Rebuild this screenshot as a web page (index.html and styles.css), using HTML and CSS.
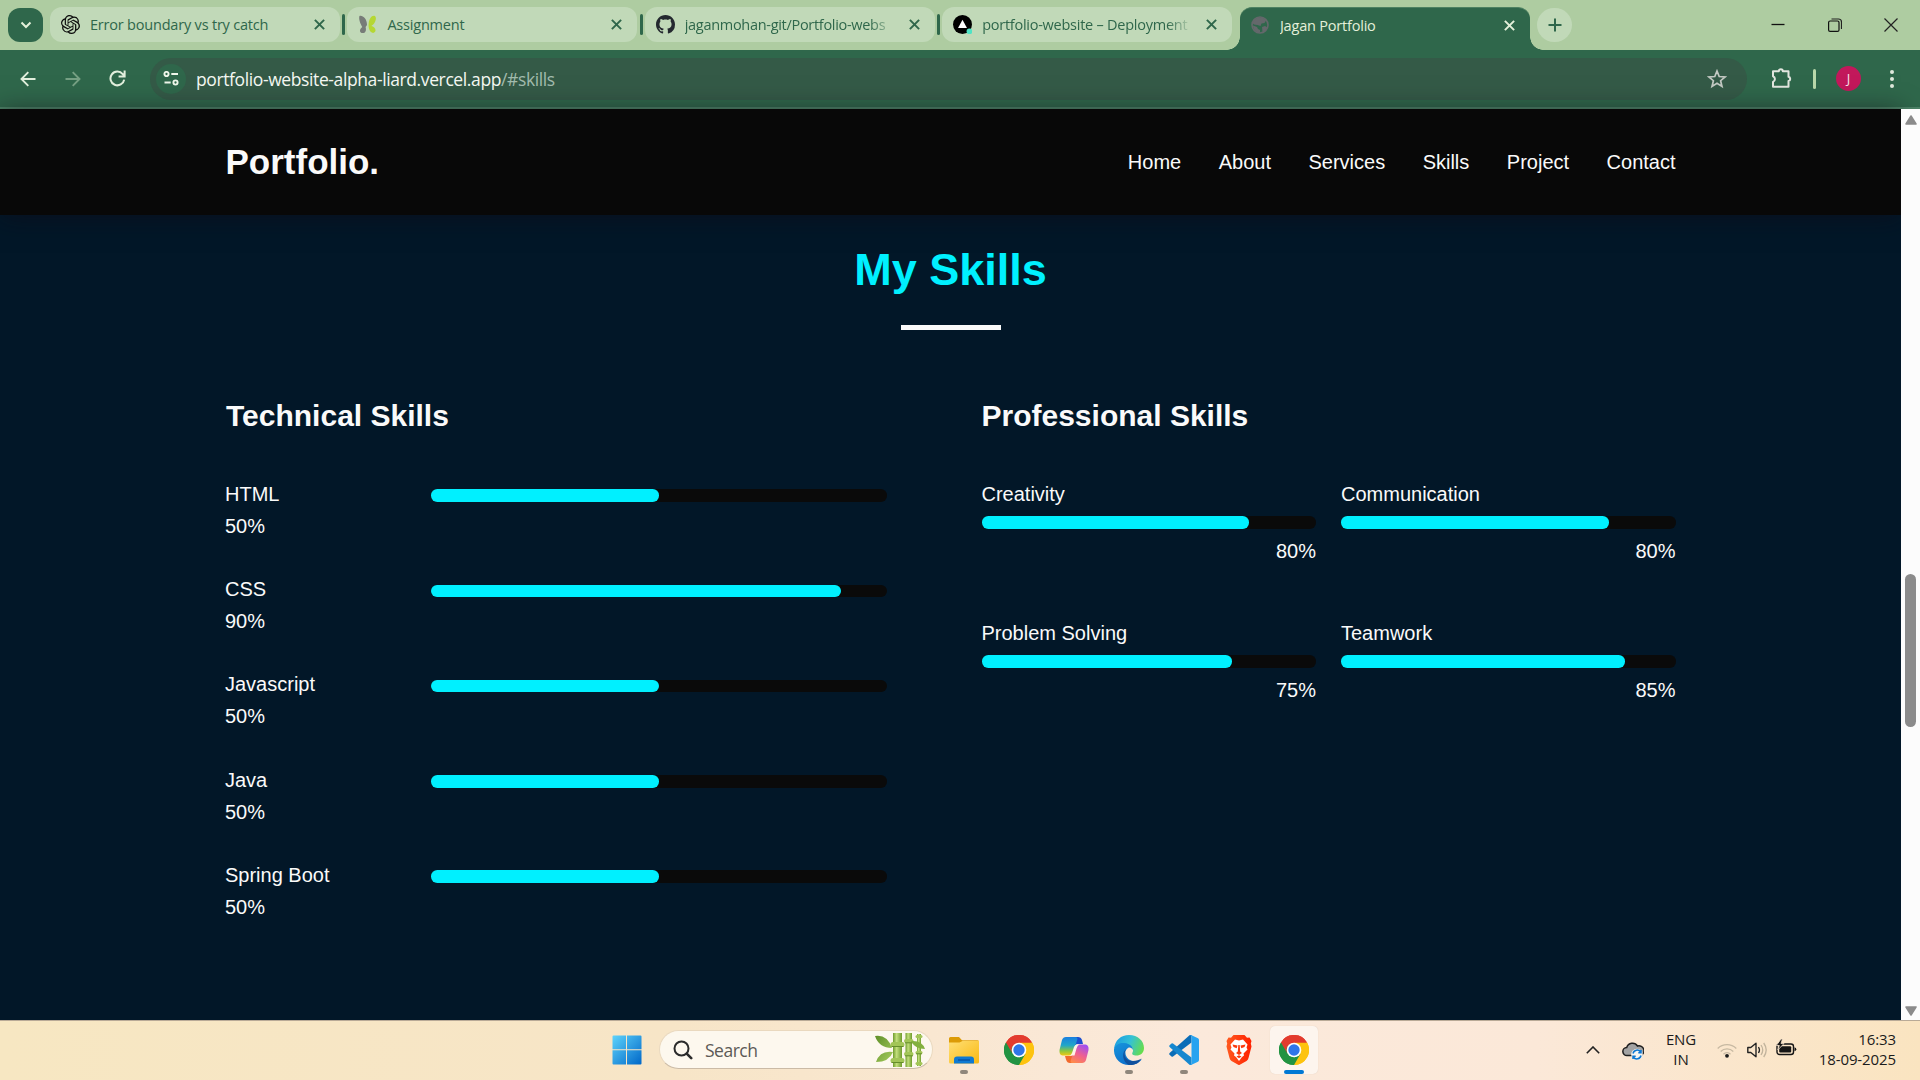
FILE: index.html
```html
<!DOCTYPE html>
<html lang="en">
<head>
<meta charset="utf-8">
<title>Jagan Portfolio</title>
<link rel="stylesheet" href="styles.css">
</head>
<body>
<svg width="0" height="0" class="defs" aria-hidden="true">
  <defs>
    <linearGradient id="win" x1="0" y1="0" x2="1" y2="1"><stop offset="0" stop-color="#5ed3fb"/><stop offset="1" stop-color="#0067c8"/></linearGradient>
    <linearGradient id="folder" x1="0" y1="0" x2="1" y2="1"><stop offset="0" stop-color="#ffdf75"/><stop offset="1" stop-color="#f9b912"/></linearGradient>
    <linearGradient id="edgeTop" x1="0" y1="0.3" x2="1" y2="0.6"><stop offset="0" stop-color="#1b9de2"/><stop offset=".5" stop-color="#35c1d5"/><stop offset="1" stop-color="#66dd4c"/></linearGradient>
    <linearGradient id="edgeLeft" x1="0" y1="0" x2="0.6" y2="1"><stop offset="0" stop-color="#1795dc"/><stop offset="1" stop-color="#0d6cc9"/></linearGradient>
    <linearGradient id="copA" x1="0" y1="0" x2="0" y2="1"><stop offset="0" stop-color="#1a7fe0"/><stop offset=".45" stop-color="#21a6c9"/><stop offset=".75" stop-color="#8cc63f"/><stop offset="1" stop-color="#f3c811"/></linearGradient>
    <linearGradient id="copB" x1="0.7" y1="0" x2="0.2" y2="1"><stop offset="0" stop-color="#a04ff0"/><stop offset=".5" stop-color="#ee5f92"/><stop offset="1" stop-color="#ff8b4a"/></linearGradient>
    <linearGradient id="brave" x1="0" y1="0" x2="1" y2="0"><stop offset="0" stop-color="#ff5a1f"/><stop offset="1" stop-color="#ff2000"/></linearGradient>
    <linearGradient id="stalk" x1="0" y1="0" x2="1" y2="0"><stop offset="0" stop-color="#6f9c2d"/><stop offset=".4" stop-color="#c3df7c"/><stop offset="1" stop-color="#6f9c2d"/></linearGradient>
    <linearGradient id="leaf" x1="0" y1="0" x2="1" y2="1"><stop offset="0" stop-color="#5f8f28"/><stop offset="1" stop-color="#a7cd5e"/></linearGradient>
    <symbol id="x" viewBox="0 0 10 10"><path d="M.8.8l8.4 8.4M9.2.8L.8 9.2" fill="none" stroke="currentColor" stroke-width="1.8"/></symbol>
    <symbol id="chrome" viewBox="0 0 30 30">
      <path d="M15 15L2 7.5A15 15 0 0 1 28 7.5z" fill="#e33b2e"/>
      <path d="M15 15L28 7.5A15 15 0 0 1 15 30z" fill="#fdc30f"/>
      <path d="M15 15L15 30A15 15 0 0 1 2 7.5z" fill="#229342"/>
      <path d="M15 7.5H28A15 15 0 0 1 15 30L21.5 18.7z" fill="#fdc30f"/>
      <path d="M2 7.5L8.5 18.7 15 22.5 21.5 18.7 15 30A15 15 0 0 1 2 7.5z" fill="#229342"/>
      <path d="M2 7.5A15 15 0 0 1 28 7.5H15A7.5 7.5 0 0 0 8.5 18.7z" fill="#e33b2e"/>
      <circle cx="15" cy="15" r="7.3" fill="#fff"/><circle cx="15" cy="15" r="5.7" fill="#2f76e9"/>
    </symbol>
  </defs>
</svg>

<header class="tabstrip">
  <button class="tab-search"><svg width="12" height="8" viewBox="0 0 12 8"><path d="M1.5 1.5L6 6l4.5-4.5" fill="none" stroke="#e4f0da" stroke-width="2"/></svg></button>
  <div class="tab">
    <svg class="fav" viewBox="0 0 24 24"><path fill="#0d0d0d" d="M22.282 9.821a5.985 5.985 0 0 0-.516-4.910 6.046 6.046 0 0 0-6.510-2.900A6.065 6.065 0 0 0 4.981 4.182a5.985 5.985 0 0 0-3.998 2.900 6.046 6.046 0 0 0 .743 7.097 5.980 5.980 0 0 0 .511 4.911 6.051 6.051 0 0 0 6.515 2.900A5.985 5.985 0 0 0 13.260 24a6.056 6.056 0 0 0 5.772-4.206 5.990 5.990 0 0 0 3.998-2.900 6.056 6.056 0 0 0-.748-7.073zm-9.022 12.608a4.476 4.476 0 0 1-2.876-1.041l.141-.080 4.779-2.758a.795.795 0 0 0 .393-.682v-6.737l2.020 1.169a.071.071 0 0 1 .038.052v5.583a4.504 4.504 0 0 1-4.495 4.494zm-9.660-4.126a4.471 4.471 0 0 1-.535-3.014l.142.085 4.783 2.759a.771.771 0 0 0 .780 0l5.843-3.369v2.333a.080.080 0 0 1-.033.061L9.740 19.950a4.499 4.499 0 0 1-6.140-1.647zM2.340 7.896a4.485 4.485 0 0 1 2.366-1.973V11.600a.766.766 0 0 0 .388.677l5.815 3.354-2.020 1.169a.076.076 0 0 1-.071 0l-4.830-2.787A4.504 4.504 0 0 1 2.340 7.872zm16.597 3.855l-5.833-3.387L15.119 7.200a.076.076 0 0 1 .071 0l4.830 2.791a4.494 4.494 0 0 1-.676 8.105v-5.678a.790.790 0 0 0-.407-.667zm2.010-3.023l-.141-.085-4.774-2.782a.776.776 0 0 0-.785 0L9.409 9.230V6.897a.066.066 0 0 1 .028-.061l4.830-2.787a4.499 4.499 0 0 1 6.680 4.660zM8.307 12.863l-2.020-1.164a.080.080 0 0 1-.038-.057V6.075a4.499 4.499 0 0 1 7.375-3.453l-.142.080L8.704 5.460a.795.795 0 0 0-.393.681zm1.097-2.365l2.602-1.500 2.607 1.500v2.999l-2.597 1.500-2.607-1.500z"/></svg>
    <span class="title t1">Error boundary vs try catch</span><svg class="close"><use href="#x"/></svg>
  </div>
  <i class="sep"></i>
  <div class="tab">
    <svg class="fav" viewBox="0 0 20 20"><path d="M1.500 1C5 0 9.500 4 9.500 10.500L8 12.500C9 16 8 19 5 19 1.500 19 1 15 4.500 12.500 2.500 9 .5 4.500 1.500 1z" fill="#777c78"/><path d="M17 .8c3 .8 2 5.500-.5 8.700-1 1.300-2 1.500-2.500 2.200 3 .8 5.500 3 4 6-2 2.800-5.500.3-6.500-3.500-.7-3-.2-4.500-.2-6C11.800 4.500 14 .5 17 .8z" fill="#b5d733"/></svg>
    <span class="title t2">Assignment</span><svg class="close"><use href="#x"/></svg>
  </div>
  <i class="sep"></i>
  <div class="tab">
    <svg class="fav" viewBox="0 0 16 16"><path fill="#24292f" d="M8 0C3.580 0 0 3.580 0 8c0 3.540 2.290 6.530 5.470 7.590.4.070.55-.17.55-.38 0-.19-.01-.82-.01-1.490-2.010.37-2.530-.49-2.690-.94-.09-.23-.48-.94-.82-1.130-.28-.15-.68-.52-.01-.53.63-.01 1.080.58 1.230.82.72 1.210 1.870.87 2.330.66.070-.52.28-.87.51-1.070-1.780-.2-3.640-.89-3.640-3.950 0-.87.31-1.590.82-2.150-.08-.2-.36-1.020.08-2.120 0 0 .67-.21 2.200.82.64-.18 1.320-.27 2-.27s1.360.09 2 .27c1.530-1.040 2.200-.82 2.200-.82.44 1.100.16 1.920.08 2.120.51.56.82 1.270.82 2.150 0 3.070-1.870 3.750-3.650 3.950.29.25.54.73.54 1.480 0 1.070-.01 1.930-.01 2.200 0 .21.15.46.55.38A8.010 8.010 0 0 0 16 8c0-4.420-3.580-8-8-8z"/></svg>
    <span class="title t3">jaganmohan-git/Portfolio-webs</span><svg class="close"><use href="#x"/></svg>
  </div>
  <i class="sep"></i>
  <div class="tab">
    <svg class="fav" viewBox="0 0 20 20"><circle cx="10" cy="10" r="10" fill="#000"/><path d="M10 5l4.700 8.700H5.300z" fill="#fff"/><circle cx="17.300" cy="17.300" r="3" fill="#4fe3c5"/></svg>
    <span class="title t4">portfolio-website – Deployment</span><svg class="close"><use href="#x"/></svg>
  </div>
  <div class="tab active">
    <svg class="fav globe" viewBox="0 0 18 18"><circle cx="9" cy="9" r="8" fill="none" stroke="#64686b" stroke-width="1.600"/><path d="M9 1.500c3 0 4.500 1 6 3L13.500 7l-3 .5-1 2.500-3-1L3 8.500 1.500 7C2.500 3.500 5.500 1.500 9 1.500zM2 9.500l4 1.500 1 2 2 1v2.500C5 16.500 2 13.500 2 9.500zM11 11l3-1 2.500 1.500c-1 2.500-2.500 4-5 4.800z" fill="#64686b"/></svg>
    <span class="title t5">Jagan Portfolio</span><svg class="close"><use href="#x"/></svg>
  </div>
  <button class="new-tab"><svg width="14" height="14" viewBox="0 0 14 14"><path d="M7 .5v13M.5 7h13" stroke="#2f674b" stroke-width="2"/></svg></button>
  <div class="win-controls">
    <svg width="14" height="14" viewBox="0 0 14 14"><path d="M.5 6.500h13" stroke="#111" stroke-width="1.300"/></svg>
    <svg width="14" height="14" viewBox="0 0 14 14"><path d="M3.500 1h7a3 3 0 0 1 3 3v7" fill="none" stroke="#222" stroke-width="1.200"/><rect x=".6" y="3" width="10.400" height="10.400" rx="1.500" fill="none" stroke="#111" stroke-width="1.200"/></svg>
    <svg width="14" height="14" viewBox="0 0 14 14"><path d="M.5.5l13 13M13.500.5l-13 13" stroke="#222" stroke-width="1.200"/></svg>
  </div>
</header>

<div class="toolbar">
  <svg class="nav-ic" viewBox="0 0 16 16"><path d="M15.500 8H1.500M8.300 1.200L1.500 8l6.800 6.800" fill="none" stroke="#e2efdd" stroke-width="1.900"/></svg>
  <svg class="nav-ic" viewBox="0 0 16 16"><path d="M.5 8h14M7.700 1.200L14.500 8l-6.800 6.800" fill="none" stroke="#76a084" stroke-width="1.900"/></svg>
  <svg class="nav-ic" viewBox="0 0 16 16"><path d="M14.300 9A6.500 6.500 0 1 1 12.900 3.800L14.500 5.500M14.700.5v5.700H9" fill="none" stroke="#e2efdd" stroke-width="1.900"/></svg>
  <div class="omnibox">
    <span class="site"><svg width="16" height="15" viewBox="0 0 16 15"><g fill="none" stroke="#eef6ea" stroke-width="1.900"><circle cx="3.500" cy="3" r="2.100"/><path d="M8.300 3H15M1.500 11.500h6.200"/><circle cx="12.500" cy="11.500" r="2.100"/></g></svg></span>
    <span class="url">portfolio-website-alpha-liard.vercel.app<em>/#skills</em></span>
    <svg class="star" viewBox="0 0 20 20"><path d="M10 2l2.200 5.500 5.900.4-4.500 3.800 1.400 5.800-5-3.200-5 3.200 1.400-5.800L1.900 7.900l5.900-.4z" fill="none" stroke="#c3c9c3" stroke-width="1.700"/></svg>
  </div>
  <svg class="ext" viewBox="0 0 22 22"><path d="M2 4.200h5.800a2 2 0 0 1 4 0H17.500V9.800a2.200 2.200 0 0 1 0 4.300v5.700H2v-4.900a3 3 0 0 0 0-5.600z" fill="none" stroke="#e2e6df" stroke-width="2" stroke-linejoin="round"/></svg>
  <i class="bar"></i>
  <span class="avatar">J</span>
  <svg class="dots" viewBox="0 0 4 18"><g fill="#dfe8dc"><circle cx="2" cy="2" r="2"/><circle cx="2" cy="9" r="2"/><circle cx="2" cy="16" r="2"/></g></svg>
</div>

<div class="viewport">
  <div class="page">
    <nav class="site-header">
      <span class="logo">Portfolio.</span>
      <div class="links"><a>Home</a><a>About</a><a>Services</a><a>Skills</a><a>Project</a><a>Contact</a></div>
    </nav>
    <main class="skills">
      <h2>My Skills</h2>
      <div class="rule"></div>
      <div class="columns">
        <section>
          <h3>Technical Skills</h3>
          <div class="tech"><p>HTML<br>50%</p><div class="track"><div class="fill" style="width:50%"></div></div></div>
          <div class="tech"><p>CSS<br>90%</p><div class="track"><div class="fill" style="width:90%"></div></div></div>
          <div class="tech"><p>Javascript<br>50%</p><div class="track"><div class="fill" style="width:50%"></div></div></div>
          <div class="tech"><p>Java<br>50%</p><div class="track"><div class="fill" style="width:50%"></div></div></div>
          <div class="tech"><p>Spring Boot<br>50%</p><div class="track"><div class="fill" style="width:50%"></div></div></div>
        </section>
        <section>
          <h3>Professional Skills</h3>
          <div class="prof">
            <div><p>Creativity</p><div class="track"><div class="fill" style="width:80%"></div></div><p class="pct">80%</p></div>
            <div><p>Communication</p><div class="track"><div class="fill" style="width:80%"></div></div><p class="pct">80%</p></div>
            <div><p>Problem Solving</p><div class="track"><div class="fill" style="width:75%"></div></div><p class="pct">75%</p></div>
            <div><p>Teamwork</p><div class="track"><div class="fill" style="width:85%"></div></div><p class="pct">85%</p></div>
          </div>
        </section>
      </div>
    </main>
  </div>
  <div class="scrollbar">
    <svg width="12" height="10" viewBox="0 0 12 10"><path d="M6 1L11 9H1z" fill="#8b8b8b" stroke="#8b8b8b" stroke-width="1.500" stroke-linejoin="round"/></svg>
    <div class="thumb"></div>
    <svg width="12" height="10" viewBox="0 0 12 10"><path d="M6 9L11 1H1z" fill="#8b8b8b" stroke="#8b8b8b" stroke-width="1.500" stroke-linejoin="round"/></svg>
  </div>
</div>

<footer class="taskbar">
  <div class="apps">
    <span class="app"><svg width="30" height="30" viewBox="0 0 30 30"><path d="M1.500.5H14v13.700H.5V1.500q0-1 1-1zM15 .5h13.500q1 0 1 1v12.700H15zM.5 15.200H14v14.300H1.500q-1 0-1-1zM15 15.200h14.500v13.300q0 1-1 1H15z" fill="url(#win)"/></svg></span>
    <div class="search">
      <svg width="20" height="20" viewBox="0 0 20 20"><circle cx="8.500" cy="8.500" r="7" fill="none" stroke="#2b2b2b" stroke-width="2"/><path d="M13.700 13.700l4.500 4.500" stroke="#2b2b2b" stroke-width="2.600" stroke-linecap="round"/></svg>
      <span>Search</span>
      <svg class="bamboo" width="50" height="34" viewBox="0 0 50 34">
        <path d="M0 3q12-2 17 12Q4 15 0 3zM1 29q4-12 17-10Q14 29 1 29z" fill="url(#leaf)"/>
        <rect x="18" y="0" width="9" height="34" fill="url(#stalk)"/><rect x="30.500" y="0" width="6.500" height="34" fill="url(#stalk)"/><rect x="42" y="1" width="4" height="32" fill="url(#stalk)"/>
        <g fill="#a2c557"><rect x="15.500" y="9" width="14" height="5" rx="2.500"/><rect x="15.500" y="25" width="14" height="5" rx="2.500"/><rect x="29" y="6" width="9.500" height="4" rx="2"/><rect x="29" y="19" width="9.500" height="4" rx="2"/><rect x="40.500" y="2" width="7" height="3" rx="1.500"/><rect x="40.500" y="18" width="7" height="3" rx="1.500"/><rect x="40.500" y="29" width="7" height="3" rx="1.500"/></g>
        <path d="M16.500 13.500h12M16.500 29.500h12M30 9.800h8M30 22.800h8M41 20.800h6" stroke="#648d2a" stroke-width="1"/>
        <path d="M36 8q11-1 14 8-10 0-14-8z" fill="#83b03e"/>
      </svg>
    </div>
    <span class="app run"><svg width="30" height="27" viewBox="0 0 30 27"><path d="M0 1.500Q0 0 1.500 0H10l3 3.200h15.500q1.500 0 1.500 1.500V10H0z" fill="#dc9b06"/><path d="M0 5.500h10.500L14 3.800h16V25q0 1.500-1.500 1.500h-27Q0 26.500 0 25z" fill="url(#folder)"/><path d="M5 26.500v-4q0-3 3-3h14q3 0 3 3v4z" fill="#107ad2"/><path d="M9 23h12" stroke="#064c9c" stroke-width="1.200"/></svg></span>
    <span class="app"><svg width="30" height="30"><use href="#chrome"/></svg></span>
    <span class="app"><svg width="30" height="28" viewBox="0 0 30 28"><path d="M15 1h4q3 0 4 3l1 4h-5q-3 0-4 4z" fill="#1b4fd0"/><path d="M7 1h9.500q2.500 0 1.800 2.500L14 17q-1 2.500-3.500 2.500H3.500Q0 19 .5 14L3 4Q4 1 7 1z" fill="url(#copA)"/><path d="M15 27h-4q-3 0-4-3.500L6 20h5q3 0 4-4z" fill="#f2692c"/><path d="M23 27h-9.500q-2.500 0-1.800-2.500L16 11q1-2.500 3.500-2.500h7Q30 9 29.500 14L27 24q-1 3-4 3z" fill="url(#copB)"/><path d="M18 8.500h2.500q-2 .5-3 4l-2 7H10q2.300-.3 3-2.500l2-6q.8-2.500 3-2.500z" fill="#fff3e8"/></svg></span>
    <span class="app run"><svg width="30" height="30" viewBox="0 0 30 30"><path d="M0 14C1 5 7 0 15 0c9 0 15 6 15 13 0 5-3.500 7.500-7.500 7.500-3.500 0-5-1.200-4-3 2-3.500-1-7.500-6-7.500C6 10 1 12 0 14z" fill="url(#edgeTop)"/><path d="M0 14c2-5 6-6.500 10.500-6 5.500.5 8.500 4 8.500 7-1-2-3-3-5-2-4.500 2.500-3 10 3 12.500 4 1.700 8 .5 11-1.500C25 28.500 20 30 15 30 6 30-.5 23 0 14z" fill="url(#edgeLeft)"/><path d="M12.500 14c-4 4-1.500 11.500 5 12 4 .3 7.500-.8 10-2.500C24 29.500 19 30.300 15 30 8 27 7.500 16.500 12.500 14z" fill="#10509d"/></svg></span>
    <span class="app run"><svg width="30" height="30" viewBox="0 0 30 30"><path d="M22.500 7.500L4 21.500q-.8.500-1.500 0L.6 19.800q-.8-.9 0-1.800L20.500.3q.8-.6 2-.2z" fill="#0b6db7"/><path d="M22.500 22.500L4 8.500q-.8-.5-1.500 0L.6 10.200q-.8.900 0 1.800l19.900 17.700q.8.600 2 .2z" fill="#1687cf"/><path d="M22 0l7 3.300q1 .5 1 1.600v20.200q0 1.100-1 1.600L22 30q-1 .2-1.700-.5 2.200.6 2.200-1.500V2q0-2.100-2.200-1.500Q21-.2 22 0z" fill="#27a3f0"/></svg></span>
    <span class="app"><svg width="26" height="30" viewBox="0 0 26 30"><path d="M7.500 0h11L21 2.800l2.500-.3L25.500 6l-.7 2.500.7 3-3 11.500q-.5 2-2 3L13 30.200 5.500 26q-1.500-1-2-3L.5 11.500l.7-3L.5 6l2-3.500 2.500.3z" fill="url(#brave)"/><path d="M9 4.500l4 1 4-1 4.500 5-1 3 1 2-4 4 .5 2-2 1.500-3 4-3-4-2-1.500.5-2-4-4 1-2-1-3z" fill="#fff"/><path d="M6.500 9.500l5 1-.8 2.700-3.200-1.200zM19.500 9.500l-5 1 .8 2.700 3.200-1.200zM12.300 10h1.400l.5 6.500L16 18l-3 2-3-2 1.800-1.500zM10.500 21.500l2.500-1.300 2.500 1.300-2.500 1.700z" fill="#fb3a0e"/></svg></span>
    <span class="app current"><svg width="30" height="30"><use href="#chrome"/></svg></span>
  </div>
  <div class="tray">
    <svg class="chev" width="14" height="8" viewBox="0 0 14 8"><path d="M.8 7.200L7 1l6.200 6.200" fill="none" stroke="#222" stroke-width="1.600"/></svg>
    <svg class="cloud" width="22" height="20" viewBox="0 0 22 20"><path d="M5 14.500a4 4 0 0 1-.3-8A6 6 0 0 1 15.500 5a4.700 4.700 0 0 1 3 9.500z" fill="#a3a3a3" stroke="#1f1f1f" stroke-width="1.500"/><circle cx="15" cy="13.500" r="5.800" fill="#f7f5f1"/><path d="M11 12.500a4.200 4.200 0 0 1 7.600-1.500M19 9v2.700h-2.700M19 14.500a4.200 4.200 0 0 1-7.600 1.500M11 18v-2.700h2.700" fill="none" stroke="#0b76d1" stroke-width="1.500"/></svg>
    <span class="lang">ENG<br>IN</span>
    <svg class="wifi" width="20" height="15" viewBox="0 0 20 15"><g fill="none" stroke="#c7b9a2" stroke-width="1.300"><path d="M.7 5.500a13 13 0 0 1 18.600 0M3.700 8.500a9 9 0 0 1 12.600 0M6.500 11.200a5 5 0 0 1 7 0"/></g><circle cx="10" cy="12.800" r="1.900" fill="#1b1b1b"/></svg>
    <svg class="vol" width="20" height="16" viewBox="0 0 20 16"><path d="M.8 5.500h3L9 1.200v13.600L3.800 10.500h-3z" fill="none" stroke="#222" stroke-width="1.400" stroke-linejoin="round"/><path d="M11.500 5q2 3 0 6" fill="none" stroke="#222" stroke-width="1.300"/><path d="M14 3q3.500 5 0 10M16.700 1q5 7 0 14" fill="none" stroke="#c1b39c" stroke-width="1.300"/></svg>
    <svg class="bat" width="21" height="17" viewBox="0 0 21 17"><rect x="1" y="5" width="16.500" height="10.500" rx="2.500" fill="none" stroke="#151515" stroke-width="1.400"/><rect x="3.200" y="7.200" width="12" height="6.200" rx="1" fill="#151515"/><path d="M18.500 8.200q1.800.5 1.800 2t-1.800 2z" fill="#151515"/><path d="M5 0L.3 6.500h3L1.800 11 8 4.500H5L6.500 0z" fill="#151515" stroke="#f9e6cf" stroke-width=".8"/></svg>
    <span class="clock">16:33<br>18-09-2025</span>
  </div>
</footer>
</body>
</html>
```
FILE: styles.css
```css
* { box-sizing: border-box; }
body {
  margin: 0; width: 1920px; height: 1080px; overflow: hidden;
  display: flex; flex-direction: column;
  font-family: "Open Sans", "Noto Sans", sans-serif;
}
.defs { position: absolute; }
button { border: 0; padding: 0; display: flex; align-items: center; justify-content: center; }
svg { display: block; flex: none; }

/* tab strip */
.tabstrip { height: 50px; background: #aecca1; display: flex; padding: 7px 22px 0 8px; flex: none; }
.tab-search { width: 35px; height: 34px; margin: 1px 7px 0 0; border-radius: 12px; background: #2f674b; flex: none; }
.tab { width: 290px; height: 35px; border-radius: 12px; background: #c1d9b8; display: flex; align-items: center; padding: 0 15px 0 11px; flex: none; color: #2f674b; }
.fav { width: 19px; height: 19px; margin-right: 10px; margin-top: 0; }
.fav.globe { width: 18px; height: 18px; margin-right: 11px; }
.title { width: 207px; overflow: hidden; white-space: nowrap; font-size: 14.500px; line-height: 34px; padding-top: 1px; letter-spacing: -.2px; }
.t3 { letter-spacing: -.3px; }
.t4 { letter-spacing: -.25px; }
.t3, .t4 { width: 210px; -webkit-mask-image: linear-gradient(90deg, #000 88%, transparent); mask-image: linear-gradient(90deg, #000 88%, transparent); }
.close { width: 11px; height: 11px; margin-left: auto; }
.sep { width: 3px; height: 21px; margin: 7px 2.200px 0; border-radius: 2px; background: #2f674b; flex: none; }
.tab.active { position: relative; margin-left: 7.800px; width: 290px; height: 43px; padding: 0 15px 8px 11px; border-radius: 12px 12px 0 0; background: #2f674b; color: #e4f0da; border-top: 1px solid #4d8162; }
.tab.active::before, .tab.active::after { content: ""; position: absolute; bottom: 0; width: 13px; height: 13px; }
.tab.active::before { left: -13px; background: radial-gradient(circle at 0 0, transparent 12.500px, #2f674b 13px); }
.tab.active::after { right: -13px; background: radial-gradient(circle at 100% 0, transparent 12.500px, #2f674b 13px); }
.new-tab { width: 35px; height: 34px; margin: 1px 0 0 7.500px; border-radius: 17px; background: #c1d9b8; flex: none; }
.win-controls { margin: 10.500px 0 0 auto; display: flex; gap: 42.500px; }

/* toolbar */
.toolbar { height: 59px; background: #2f674b; border-bottom: 2px solid #4c8266; display: flex; align-items: center; padding: 0 26px 0 20px; flex: none; }
.nav-ic { width: 16px; height: 16px; margin-right: 29px; }
.nav-ic:nth-child(3) { width: 17px; height: 17px; margin: 0 24px 0 -1px; }
.omnibox { width: 1597px; height: 42px; border-radius: 21px; background: #345a47; display: flex; align-items: center; padding: 0 20px 0 6px; }
.site { width: 30px; height: 30px; border-radius: 50%; background: #2f674b; display: flex; align-items: center; justify-content: center; margin-right: 10px; }
.url { font-size: 17.500px; letter-spacing: -.390px; color: #f4f8f2; white-space: nowrap; padding-top: 1px; }
.url em { font-style: normal; color: #a3bcae; }
.star { width: 20px; height: 20px; margin-left: auto; }
.ext { width: 22px; height: 22px; margin: -1px 0 0 24px; }
.bar { width: 3px; height: 20px; margin-left: 20px; border-radius: 2px; background: #b9d8ab; }
.avatar { width: 25px; height: 25px; margin-left: 20px; border-radius: 50%; background: #c2185b; color: #f7e0ea; font-size: 13px; line-height: 25px; text-align: center; }
.dots { width: 4px; height: 18px; margin-left: auto; }

/* portfolio page */
.viewport { height: 911px; flex: none; display: flex; }
.page { width: 1901px; background: #021728; color: #fafafa; font-family: "Liberation Sans", Arial, sans-serif; font-size: 20px; line-height: 32px; }
.site-header { height: 106px; padding: 0 225.500px; background: #080808; box-shadow: 0 2px 24px rgba(16, 10, 20, .55); display: flex; align-items: center; justify-content: space-between; }
.logo { font-size: 35px; font-weight: 700; }
.links { display: flex; gap: 37.500px; }
.skills { padding: 32px 225px 0; }
h2, h3, p { margin: 0; }
h2 { font-size: 45px; line-height: 45px; text-align: center; color: #00f0ff; }
.rule { width: 100px; height: 5px; margin: 33px auto 0; background: #fafafa; }
.columns { display: grid; grid-template-columns: 662px 694px; column-gap: 94.500px; margin-top: 62px; }
h3 { font-size: 30px; line-height: 48px; margin-bottom: 37.750px; }
section:first-child h3 { padding-left: 1px; }
.tech { display: flex; height: 64px; margin-bottom: 31.250px; }
.tech p { width: 206px; }
.tech .track { flex: 1; margin-top: 11.600px; }
.track { height: 12.500px; border-radius: 6.250px; background: #0a0a0a; }
.fill { height: 100%; border-radius: 6.250px; background: #00f0ff; }
.prof { display: grid; grid-template-columns: 1fr 1fr; column-gap: 25px; row-gap: 50px; }
.prof > div { height: 89px; }
.prof .track { margin-top: 6.250px; }
.pct { text-align: right; margin-top: 6.250px; }

.scrollbar { width: 19px; background: #fcfcfc; display: flex; flex-direction: column; align-items: center; padding: 6px 0 4px; }
.thumb { width: 11px; height: 153px; margin: 449px 0 auto; border-radius: 6px; background: #8b8b8b; }

/* taskbar */
.taskbar { height: 60px; flex: none; display: flex; justify-content: space-between; border-top: 1px solid #b9aa97; background: linear-gradient(90deg, #f7e7c2 0, #f7e5c7 35%, #fbe9db 62%, #fbe8d8 80%, #fae4c0 100%); padding: 0 24px 0 603px; }
.apps { display: flex; gap: 7px; padding-top: 5px; }
.app { position: relative; width: 48px; height: 48px; display: flex; align-items: center; justify-content: center; border-radius: 5px; }
.app.run::after, .app.current::after { content: ""; position: absolute; left: 20px; bottom: 0; width: 8px; height: 4px; border-radius: 2px; background: #8f867b; }
.app.current { background: #fdf5ee; box-shadow: 0 0 1px #d9c8b8; }
.app.current::after { left: 14px; width: 20px; background: #0078d4; }
.search { width: 274px; height: 39px; margin: 4px 0 0 1px; border-radius: 20px; background: #fdf8ee; border: 1px solid #ead9bf; border-bottom-color: #cbbba6; display: flex; align-items: center; padding: 0 7px 0 13px; font-size: 17.500px; letter-spacing: -.5px; color: #5c5a56; }
.search span { margin-left: 12px; padding-top: 1px; }
.bamboo { margin-left: auto; }
.tray { display: flex; font-size: 15px; line-height: 20px; letter-spacing: -.1px; color: #1b1b1b; padding-top: 8px; }
.chev { margin-top: 17px; }
.cloud { margin: 12px 0 0 22px; }
.lang { width: 40px; margin-left: 17px; text-align: center; }
.wifi { margin: 14px 0 0 16px; }
.vol { margin: 13px 0 0 10px; }
.bat { margin: 10px 0 0 9px; }
.clock { margin-left: 17px; width: 82px; text-align: right; white-space: nowrap; }
```
